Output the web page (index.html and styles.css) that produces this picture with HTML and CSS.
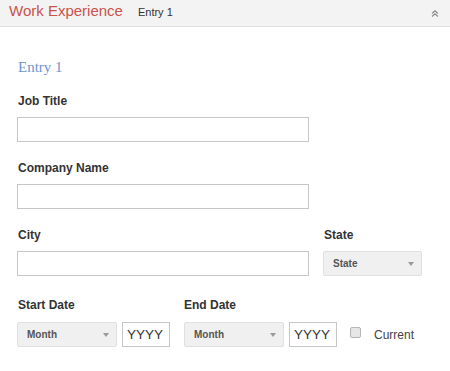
FILE: index.html
```html
<!DOCTYPE html>
<html lang="en">

<head>
    <meta charset="UTF-8">
    <meta name="viewport" content="width=device-width, initial-scale=1.0">
    <title>Work Experience</title>
    <link rel="stylesheet" href="styles.css">
</head>

<body>
    <header class="section-bar">
        <span class="section-title">Work Experience</span>
        <span class="section-entry">Entry 1</span>
        <button class="collapse-btn" aria-label="Collapse">
            <svg width="8" height="7" viewBox="0 0 8 7">
                <path d="M1 3.5 L4 0.8 L7 3.5 M1 6.5 L4 3.8 L7 6.5" fill="none" stroke="#8a8a8a" stroke-width="1.1"/>
            </svg>
        </button>
    </header>

    <main class="entry">
        <h2 class="entry-title">Entry 1</h2>

        <div class="field">
            <label for="jobTitle">Job Title</label>
            <input type="text" id="jobTitle" class="text-input wide">
        </div>

        <div class="field">
            <label for="company">Company Name</label>
            <input type="text" id="company" class="text-input wide">
        </div>

        <div class="field-row">
            <div class="field">
                <label for="city">City</label>
                <input type="text" id="city" class="text-input wide">
            </div>
            <div class="field">
                <label for="state">State</label>
                <div class="select-wrap state">
                    <select id="state">
                        <option>State</option>
                    </select>
                </div>
            </div>
        </div>

        <div class="field-row dates">
            <div class="field">
                <label>Start Date</label>
                <div class="date-group">
                    <div class="select-wrap month">
                        <select>
                            <option>Month</option>
                        </select>
                    </div>
                    <input type="text" class="text-input year" placeholder="YYYY">
                </div>
            </div>
            <div class="field">
                <label>End Date</label>
                <div class="date-group">
                    <div class="select-wrap month">
                        <select>
                            <option>Month</option>
                        </select>
                    </div>
                    <input type="text" class="text-input year" placeholder="YYYY">
                    <label class="current">
                        <input type="checkbox">
                        <span>Current</span>
                    </label>
                </div>
            </div>
        </div>
    </main>
</body>

</html>
```

FILE: styles.css
```css
* {
    margin: 0;
    padding: 0;
    box-sizing: border-box;
    font-family: 'Liberation Sans', Arial, Helvetica, sans-serif;
}

body {
    background-color: #fff;
    width: 450px;
}

.section-bar {
    display: flex;
    align-items: baseline;
    height: 27px;
    padding: 2px 0 0 9px;
    background-color: #f3f3f3;
    border-bottom: 1px solid #dedede;
}

.section-title {
    font-size: 15px;
    line-height: 18px;
    color: #c9534b;
}

.section-entry {
    font-size: 11px;
    color: #333;
    margin-left: 15px;
}

.collapse-btn {
    align-self: center;
    margin: -2px 11px 0 auto;
    border: none;
    background: none;
    display: flex;
    cursor: pointer;
}

.entry {
    padding: 31px 0 0 17px;
}

.entry-title {
    font-family: 'Liberation Serif', 'Times New Roman', serif;
    font-size: 15px;
    font-weight: normal;
    line-height: 18px;
    color: #6d95cd;
    padding-left: 1px;
    margin-bottom: 18px;
}

.field {
    display: flex;
    flex-direction: column;
    margin-bottom: 19px;
}

.field > label {
    font-size: 12px;
    font-weight: bold;
    line-height: 14px;
    color: #333;
    padding-left: 1px;
    margin-bottom: 9px;
}

.text-input {
    height: 25px;
    border: 1px solid #c6c6c6;
    background-color: #fff;
    font-size: 13.5px;
    color: #333;
    padding: 0 4px;
    outline: none;
}

.text-input::placeholder {
    color: #333;
}

.wide {
    width: 292px;
}

.field-row {
    display: flex;
    gap: 14px;
}

.dates {
    margin-top: 3px;
}

.dates .field > label {
    margin-bottom: 10px;
}

.dates .field + .field > label {
    padding-left: 0;
}

.select-wrap {
    position: relative;
    height: 25px;
}

.select-wrap select {
    appearance: none;
    -webkit-appearance: none;
    width: 100%;
    height: 100%;
    border: 1px solid #e0e0e0;
    border-radius: 2px;
    background-color: #f0f0f0;
    font-size: 10px;
    font-weight: bold;
    color: #555;
    padding: 0 0 0 9px;
    outline: none;
}

.select-wrap::after {
    content: "";
    position: absolute;
    right: 8px;
    top: 11px;
    border-left: 3px solid transparent;
    border-right: 3px solid transparent;
    border-top: 4px solid #9a9a9a;
    pointer-events: none;
}

.state {
    width: 99px;
}

.month {
    width: 100px;
}

.date-group {
    display: flex;
    align-items: center;
    gap: 5px;
}

.year {
    width: 48px;
}

.current {
    display: flex;
    align-items: center;
    gap: 13px;
    margin-left: 8px;
    font-size: 12px;
    color: #444;
}

.current input {
    appearance: none;
    -webkit-appearance: none;
    width: 11px;
    height: 11px;
    border: 1px solid #b5b5b5;
    border-radius: 2px;
    background-color: #e6e6e6;
    margin-top: -5px;
}
```
